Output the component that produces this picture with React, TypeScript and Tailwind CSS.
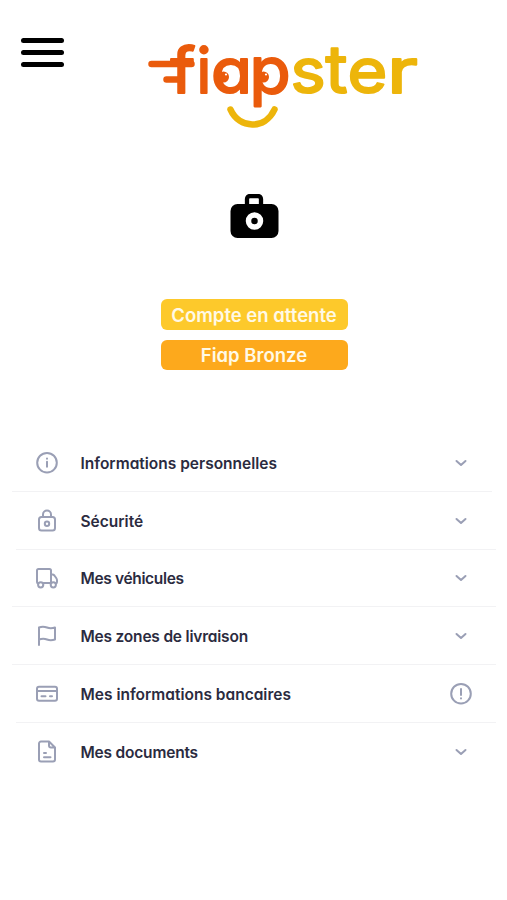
import type { ReactNode } from 'react';

interface ProfileSection {
  label: string;
  icon: ReactNode;
  divider: string;
  tracking: string;
  warning?: boolean;
}

const FONT = "font-['Inter','Lato',sans-serif] [font-feature-settings:'cv11']";

const LineIcon = ({ children }: { children: ReactNode }) => (
  <svg
    className="w-6 h-6 shrink-0 text-[#9a9fb5]"
    viewBox="0 0 24 24"
    fill="none"
    stroke="currentColor"
    strokeWidth={2}
    strokeLinecap="round"
    strokeLinejoin="round"
  >
    {children}
  </svg>
);

const sections: ProfileSection[] = [
  {
    label: 'Informations personnelles',
    divider: 'ml-3 mr-[15px]',
    tracking: 'tracking-[0px]',
    icon: (
      <LineIcon>
        <circle cx="12" cy="11.7" r="9.8" />
        <path d="M12 10.7v5M12 7.5v.2" />
      </LineIcon>
    ),
  },
  {
    label: 'Sécurité',
    divider: 'ml-4 mr-[11px]',
    tracking: 'tracking-[0px]',
    icon: (
      <LineIcon>
        <rect x="4" y="8" width="16" height="13.5" rx="2.5" />
        <path d="M8 8V5.5a4 4 0 0 1 8 0V8" />
        <circle cx="12" cy="14.7" r="2.2" />
      </LineIcon>
    ),
  },
  {
    label: 'Mes véhicules',
    divider: 'ml-3 mr-[11px]',
    tracking: 'tracking-[-0.35px]',
    icon: (
      <LineIcon>
        <path d="M3 17.5C2.3 17.2 2 16.7 2 16V4.5C2 3.5 2.5 3 3.5 3h11c1 0 1.5.5 1.5 1.5V17H8.5M16 8.5h1.500c.8 0 1.400.4 1.900 1l1.800 2.500c.5.7.8 1.500.8 2.300V16c0 .7-.4 1.200-1 1.500" />
        <circle cx="5.7" cy="18.8" r="2.6" />
        <circle cx="18.3" cy="18.8" r="2.6" />
      </LineIcon>
    ),
  },
  {
    label: 'Mes zones de livraison',
    divider: 'ml-3 mr-[11px]',
    tracking: 'tracking-[-0.2px]',
    icon: (
      <LineIcon>
        <path d="M4 21V3.5c3-1.300 5.500-1 8 0s5 1 8 0v12c-3 1-5.500 1-8 0s-5-1-8 0" />
      </LineIcon>
    ),
  },
  {
    label: 'Mes informations bancaires',
    divider: 'ml-4 mr-[11px]',
    tracking: 'tracking-[0px]',
    warning: true,
    icon: (
      <LineIcon>
        <rect x="2" y="4.7" width="20" height="14" rx="2" />
        <path d="M2 9h20M6.5 14.2h4M15 14.2h2" />
      </LineIcon>
    ),
  },
  {
    label: 'Mes documents',
    divider: '',
    tracking: 'tracking-[-0.2px]',
    icon: (
      <LineIcon>
        <path d="M14 1.5H6a2 2 0 0 0-2 2v16a2 2 0 0 0 2 2h12a2 2 0 0 0 2-2v-12zM14 1.5v4a2 2 0 0 0 2 2h4M9 13h2M9 17.2h6.5" />
      </LineIcon>
    ),
  },
];

const logoLetters = [
  { char: 'f', color: '#ea5b0c', transform: 'translate(170.5 93) scale(1.1 1.03)' },
  { char: 'i', color: '#ea5b0c', transform: 'translate(196.5 93) scale(1 1.03)' },
  { char: 'a', color: '#ea5b0c', transform: 'translate(211 93) scale(1.1 1.03)' },
  { char: 'p', color: '#ea5b0c', transform: 'translate(249.5 93) scale(1.1 1.05)' },
  { char: 's', color: '#edb50b', transform: 'translate(290.5 93) scale(1.09 1.03)' },
  { char: 't', color: '#edb50b', transform: 'translate(325.5 93) scale(1.1 1.08)' },
  { char: 'e', color: '#edb50b', transform: 'translate(347.5 93) scale(1.12 1.03)' },
  { char: 'r', color: '#edb50b', transform: 'translate(387 93) scale(1.34 1.03)' },
];

const Logo = () => (
  <svg className="w-[290px] h-[125px] shrink-0" viewBox="143 10 290 125" strokeLinecap="round" strokeLinejoin="round">
    <g fontFamily="Inter, 'DejaVu Sans', sans-serif" fontSize="61" fontWeight="400" strokeWidth="2">
      {logoLetters.map(({ char, color, transform }) => (
        <text key={char} transform={transform} fill={color} stroke={color}>{char}</text>
      ))}
    </g>
    <path d="M151.5 64H191.5M166.5 79.5H181" stroke="#ea5b0c" strokeWidth="6.5" />
    <g fill="#ea5b0c">
      <circle cx="223.5" cy="77" r="5.5" />
      <circle cx="263.5" cy="77" r="5.5" />
    </g>
    <g fill="#fff">
      <circle cx="226" cy="74.5" r="1.1" />
      <circle cx="266" cy="74.5" r="1.1" />
    </g>
    <path d="M230.5 109.5C239 129 265 130 274.5 109.5" fill="none" stroke="#edb50b" strokeWidth="6.5" />
  </svg>
);

const ProfileRow = ({ section }: { section: ProfileSection }) => (
  <li>
    <button type="button" className="flex items-center w-full h-[56.8px] pt-px pl-[35px] pr-[34px] text-left cursor-pointer">
      {section.icon}
      <span className={`ml-[21.5px] pt-px text-[15.5px] font-semibold text-[#2b2b40] whitespace-nowrap ${section.tracking}`}>
        {section.label}
      </span>
      <span className="ml-auto">
        <LineIcon>
          {section.warning ? (
            <>
              <circle cx="12" cy="11.7" r="9.8" />
              <path d="M12 7v6M12 16.3v.1" />
            </>
          ) : (
            <path d="M7.5 10L12 14l4.5-4" />
          )}
        </LineIcon>
      </span>
    </button>
    {section.divider && <div className={`h-px bg-[#f2f2f4] ${section.divider}`} />}
  </li>
);

const App = () => {
  return (
    <div className={`w-full h-[900px] bg-white overflow-hidden ${FONT}`}>
      <header className="flex items-start h-[135px]">
        <button type="button" aria-label="Menu" className="flex flex-col gap-[7px] mt-[38px] ml-[21px] cursor-pointer">
          <span className="w-[43px] h-[5px] bg-black rounded-full" />
          <span className="w-[43px] h-[5px] bg-black rounded-full" />
          <span className="w-[43px] h-[5px] bg-black rounded-full" />
        </button>
        <div className="ml-[79px] mt-[10px]">
          <Logo />
        </div>
      </header>

      <div className="flex flex-col items-center pl-px">
        <svg className="w-[49px] h-[44px] mt-[59px]" viewBox="0 0 49 44">
          <rect x="0.5" y="10" width="48" height="34" rx="7" />
          <path d="M17 12V5a3 3 0 0 1 3-3h8a3 3 0 0 1 3 3v7" fill="none" stroke="#000" strokeWidth="4.3" />
          <circle cx="24.5" cy="27" r="6" stroke="#fff" strokeWidth="5.5" />
        </svg>

        <div className="flex flex-col gap-[10px] w-[187px] mt-[61px] text-[18.5px] font-semibold text-[#fff9e6]">
          <span className="flex items-center justify-center h-[31px] pt-[2px] rounded-[6px] bg-[#fdc92b] whitespace-nowrap">Compte en attente</span>
          <span className="flex items-center justify-center h-[30px] pt-px rounded-[6px] bg-[#fda91c] whitespace-nowrap">Fiap Bronze</span>
        </div>
      </div>

      <ul className="mt-[64px]">
        {sections.map((section) => (
          <ProfileRow key={section.label} section={section} />
        ))}
      </ul>
    </div>
  );
};

export default App;
